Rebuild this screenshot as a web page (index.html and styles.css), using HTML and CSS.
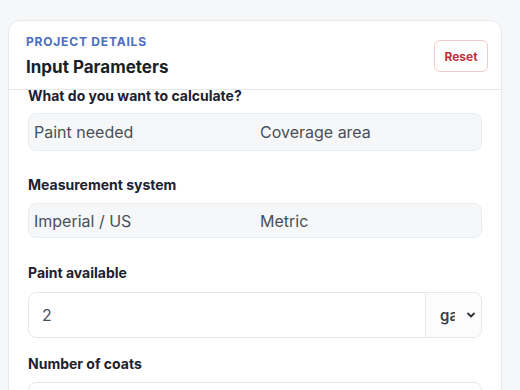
FILE: index.html
```html
<!DOCTYPE html>
<html lang="en">
<head>
<meta charset="utf-8">
<title>Input Parameters</title>
<link rel="stylesheet" href="styles.css">
</head>
<body>
<main class="page">
  <section class="card">
    <header class="card-head">
      <div class="head-text">
        <div class="eyebrow">PROJECT DETAILS</div>
        <h2 class="title">Input Parameters</h2>
      </div>
      <button class="reset" type="button">Reset</button>
    </header>
    <div class="card-body">
      <div class="scroll">
        <div class="field field-first">
          <div class="label">What do you want to calculate?</div>
          <div class="seg seg-a">
            <div class="seg-opt">Paint needed</div>
            <div class="seg-opt">Coverage area</div>
          </div>
        </div>
        <div class="field field-seg">
          <div class="label">Measurement system</div>
          <div class="seg seg-b">
            <div class="seg-opt">Imperial / US</div>
            <div class="seg-opt">Metric</div>
          </div>
        </div>
        <div class="field field-input">
          <div class="label">Paint available</div>
          <div class="input-group">
            <div class="input-val">2</div>
            <div class="unit">
              <span class="unit-text">gal</span>
              <svg class="chev" width="10" height="10" viewBox="0 0 10 10"><path d="M2 3.5 L5 6.5 L8 3.5" fill="none" stroke="#2b2f36" stroke-width="1.8" stroke-linecap="round" stroke-linejoin="round"/></svg>
            </div>
          </div>
        </div>
        <div class="field field-input2">
          <div class="label">Number of coats</div>
          <div class="input-group">
            <div class="input-val">2</div>
          </div>
        </div>
      </div>
    </div>
  </section>
</main>
</body>
</html>
```

FILE: styles.css
```css
html, body {
  margin: 0;
  padding: 0;
  height: 100%;
  overflow: hidden;
  background: #f6f7f9;
  font-family: Inter, "Noto Sans", "Liberation Sans", sans-serif;
}

.page {
  padding: 20px 18px 0 8px;
}

.card {
  background: #ffffff;
  border: 1px solid #e7e9ed;
  border-radius: 12px;
  height: 600px;
  display: flex;
  flex-direction: column;
}

.card-head {
  display: flex;
  align-items: center;
  justify-content: space-between;
  padding: 13px 13px 11px 17px;
  border-bottom: 1px solid #e6e8ec;
}

.head-text {
  display: flex;
  flex-direction: column;
  gap: 6px;
}

.eyebrow {
  font-size: 12px;
  line-height: 16px;
  font-weight: 700;
  letter-spacing: 0.8px;
  color: #4b6dbf;
}

.title {
  margin: 0;
  font-size: 17px;
  line-height: 22px;
  font-weight: 700;
  color: #1a1f29;
}

.reset {
  width: 54px;
  height: 32px;
  border: 1px solid #efcccc;
  border-radius: 6px;
  background: #ffffff;
  color: #c0303a;
  font-family: inherit;
  font-size: 12px;
  font-weight: 700;
  padding: 0;
}

.card-body {
  flex: 1;
  overflow: hidden;
}

.scroll {
  padding: 0 19px;
  margin-top: -4px;
}

.field {
  display: flex;
  flex-direction: column;
  gap: 8px;
}

.field-first { gap: 7px; }
.field-seg { margin-top: 24px; }
.field-input { margin-top: 25px; gap: 9px; }
.field-input2 { margin-top: 16px; }

.label {
  font-size: 14px;
  line-height: 20px;
  font-weight: 700;
  color: #1c2230;
}

.seg {
  display: grid;
  grid-template-columns: 1fr 1fr;
  background: #f5f7f9;
  border: 1px solid #eaedf0;
  border-radius: 8px;
  box-sizing: border-box;
}

.seg-a { height: 38px; }
.seg-b { height: 35px; }

.seg-opt {
  display: flex;
  align-items: center;
  padding: 0 5px;
  font-size: 16px;
  color: #4a4f57;
}

.input-group {
  display: flex;
  height: 46px;
  box-sizing: border-box;
  border: 1px solid #e6e8eb;
  border-radius: 8px;
  background: #ffffff;
}

.input-val {
  flex: 1;
  display: flex;
  align-items: center;
  padding: 0 13px;
  font-size: 16px;
  color: #4a4f57;
}

.unit {
  width: 56px;
  border-left: 1px solid #e6e8eb;
  display: flex;
  align-items: center;
  padding: 0 5px 0 14px;
  box-sizing: border-box;
  background: #fcfcfd;
  border-radius: 0 8px 8px 0;
}

.unit-text {
  width: 15px;
  overflow: hidden;
  white-space: nowrap;
  font-size: 15px;
  font-weight: 600;
  color: #3a3f47;
}

.chev {
  margin-left: auto;
  flex: none;
}
```
